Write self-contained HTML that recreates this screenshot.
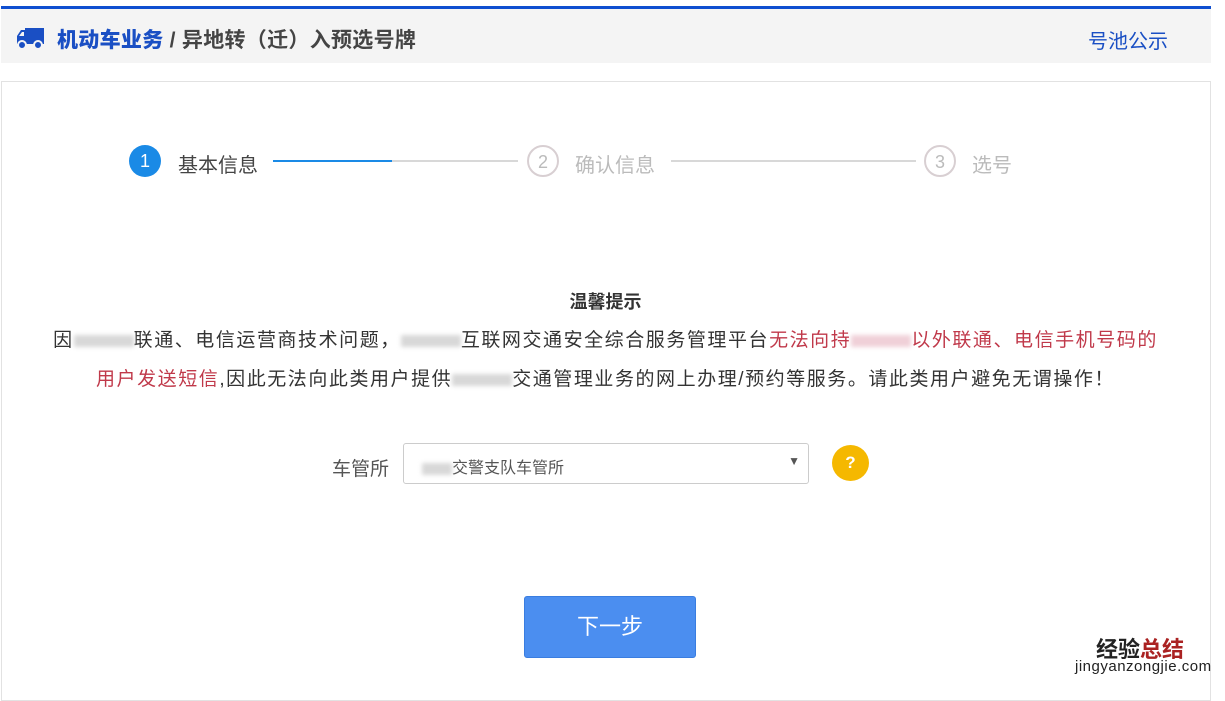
<!DOCTYPE html>
<html><head><meta charset="utf-8"><style>
*{margin:0;padding:0;box-sizing:border-box}
body{width:1225px;height:684px;background:#fff;font-family:"Liberation Sans","Noto Sans CJK SC",sans-serif;position:relative;overflow:hidden}
.top{position:absolute;left:1px;top:6px;width:1210px;height:3px;background:#0f4fd0}
.hd{position:absolute;left:1px;top:9px;width:1210px;height:54px;background:#f4f4f4}
.t{position:absolute;left:57px;top:24px;font-size:21px;font-weight:bold;color:#444;letter-spacing:0.3px}
.t b{color:#1a4fc4}
.pool{position:absolute;left:1088px;top:25px;font-size:20px;color:#1a4fc4}
.box{position:absolute;left:1px;top:81px;width:1210px;height:620px;border:1px solid #e2e2e2}
.c{position:absolute;width:32px;height:32px;border-radius:50%;text-align:center;line-height:30px;font-size:18px}
.s{position:absolute;font-size:20px}
.ln{position:absolute;height:2px;top:160px;background:#d8d8d8}
.p{position:absolute;left:0;width:1211px;text-align:center;font-size:19px;color:#333;letter-spacing:1.55px}
.r{color:#c0394a}
.blur{display:inline-block;background:#d8d8d8;filter:blur(2px);height:12px;vertical-align:middle}
</style></head><body>
<div class="top"></div><div class="hd"></div>
<svg style="position:absolute;left:16px;top:27px" width="29" height="23" viewBox="0 0 29 23"><path d="M9 1h19v16H9z M1 9l4-6h4v14H1z" fill="#1a4fc4"/><circle cx="6" cy="18" r="4" fill="#1a4fc4" stroke="#f4f4f4" stroke-width="2"/><circle cx="22" cy="18" r="4" fill="#1a4fc4" stroke="#f4f4f4" stroke-width="2"/><path d="M3 9l3-4h2v4z" fill="#f4f4f4"/></svg>
<div class="t"><b>机动车业务</b> / 异地转（迁）入预选号牌</div>
<div class="pool">号池公示</div>
<div class="box"></div>
<div class="c" style="left:129px;top:145px;background:#1a8ae6;color:#fff;line-height:32px">1</div>
<div class="s" style="left:178px;top:149px;color:#444">基本信息</div>
<div class="ln" style="left:273px;width:245px"></div><div class="ln" style="left:273px;width:119px;background:#1a8ae6"></div>
<div class="c" style="left:527px;top:145px;border:2px solid #d8cfd2;color:#bbb">2</div>
<div class="s" style="left:575px;top:149px;color:#bbb">确认信息</div>
<div class="ln" style="left:671px;width:245px"></div>
<div class="c" style="left:924px;top:145px;border:2px solid #d8cfd2;color:#bbb">3</div>
<div class="s" style="left:972px;top:149px;color:#bbb">选号</div>
<div class="p" style="top:288px;font-weight:bold;font-size:18px;letter-spacing:0">温馨提示</div>
<div class="p" style="top:325px">因<span class="blur" style="width:60px"></span>联通、电信运营商技术问题，<span class="blur" style="width:60px"></span>互联网交通安全综合服务管理平台<span class="r">无法向持<span class="blur" style="width:60px;background:#f0d0d8"></span>以外联通、电信手机号码的</span></div>
<div class="p" style="top:364px"><span class="r">用户发送短信</span>,因此无法向此类用户提供<span class="blur" style="width:60px"></span>交通管理业务的网上办理/预约等服务。请此类用户避免无谓操作！</div>
<div class="s" style="left:332px;top:454px;font-size:19px;color:#555">车管所</div>
<div style="position:absolute;left:403px;top:443px;width:406px;height:41px;border:1px solid #ccc;border-radius:3px;font-size:16px;color:#555;padding:10px 0 0 18px"><span class="blur" style="width:30px"></span>交警支队车管所<span style="position:absolute;right:8px;top:10px;font-size:12px">▼</span></div>
<div style="position:absolute;left:832px;top:445px;width:37px;height:36px;border-radius:50%;background:#f5b800;color:#fff;font-weight:bold;text-align:center;line-height:36px;font-size:17px">?</div>
<div style="position:absolute;left:524px;top:596px;width:172px;height:62px;background:#4b8ef0;border:1px solid #3a7de0;border-radius:3px;color:#fff;font-size:22px;text-align:center;line-height:60px">下一步</div>
<div style="position:absolute;left:1096px;top:632px;font-size:22px;font-weight:bold;color:#222">经验<span style="color:#a22">总结</span></div>
<div style="position:absolute;left:1075px;top:658px;font-size:15px;color:#222;letter-spacing:0.5px">jingyanzongjie.com</div>
</body></html>
